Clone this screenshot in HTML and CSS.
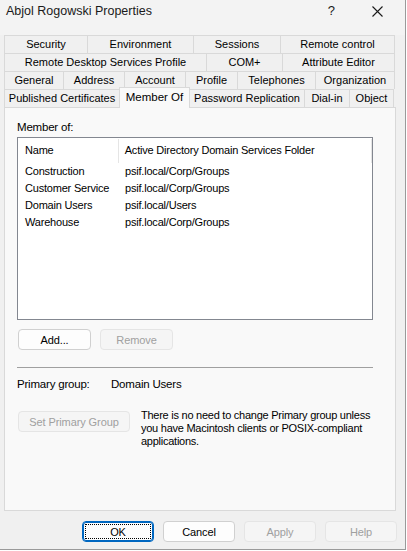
FILE: index.html
```html
<!DOCTYPE html>
<html>
<head>
<meta charset="utf-8">
<link rel="stylesheet" href="styles.css">
</head>
<body>
<div class="window">
  <div class="titlebar">
    <span class="title">Abjol Rogowski Properties</span>
    <span class="help-q">?</span>
    <span class="close-x"><svg width="11" height="11" viewBox="0 0 11 11"><path d="M0.5 0.5 L10.5 10.5 M10.5 0.5 L0.5 10.5" stroke="#1a1a1a" stroke-width="1.1" fill="none"/></svg></span>
  </div>
  <div class="tabs">
    <div class="tabrow">
      <div class="tab t-security">Security</div>
      <div class="tab t-env">Environment</div>
      <div class="tab t-sessions">Sessions</div>
      <div class="tab t-remote">Remote control</div>
    </div>
    <div class="tabrow">
      <div class="tab t-rds">Remote Desktop Services Profile</div>
      <div class="tab t-com">COM+</div>
      <div class="tab t-attr">Attribute Editor</div>
    </div>
    <div class="tabrow">
      <div class="tab t-general">General</div>
      <div class="tab t-address">Address</div>
      <div class="tab t-account">Account</div>
      <div class="tab t-profile">Profile</div>
      <div class="tab t-tel">Telephones</div>
      <div class="tab t-org">Organization</div>
    </div>
    <div class="tabrow">
      <div class="tab t-pub">Published Certificates</div>
      <div class="tab t-member selected">Member Of</div>
      <div class="tab t-pwd">Password Replication</div>
      <div class="tab t-dial">Dial-in</div>
      <div class="tab t-object">Object</div>
    </div>
  </div>
  <div class="panel">
    <div class="label">Member of:</div>
    <div class="listbox">
      <div class="lv-header">
        <div class="col col-name">Name</div>
        <div class="col col-folder">Active Directory Domain Services Folder</div>
        <div class="col col-rest"></div>
      </div>
      <div class="lv-row"><div class="cell c-name">Construction</div><div class="cell">psif.local/Corp/Groups</div></div>
      <div class="lv-row"><div class="cell c-name">Customer Service</div><div class="cell">psif.local/Corp/Groups</div></div>
      <div class="lv-row"><div class="cell c-name">Domain Users</div><div class="cell">psif.local/Users</div></div>
      <div class="lv-row"><div class="cell c-name">Warehouse</div><div class="cell">psif.local/Corp/Groups</div></div>
    </div>
    <div class="btnrow">
      <button class="btn">Add...</button>
      <button class="btn disabled">Remove</button>
    </div>
    <div class="separator"></div>
    <div class="primary">
      <span class="pg-label">Primary group:</span>
      <span class="pg-value">Domain Users</span>
    </div>
    <div class="setrow">
      <button class="btn disabled wide">Set Primary Group</button>
      <div class="note">There is no need to change Primary group unless<br>you have Macintosh clients or POSIX-compliant<br>applications.</div>
    </div>
  </div>
  <div class="footer">
    <button class="btn fbtn default"><span class="focus">OK</span></button>
    <button class="btn fbtn">Cancel</button>
    <button class="btn fbtn disabled">Apply</button>
    <button class="btn fbtn disabled">Help</button>
  </div>
</div>
</body>
</html>
```
FILE: styles.css
```css
* { box-sizing: border-box; }
html, body { margin: 0; padding: 0; background: #ffffff; }
body {
  font-family: "Liberation Sans", Arial, sans-serif;
  font-size: 12px;
  color: #000;
}
.window {
  width: 406px;
  height: 550px;
  background: #f0f0f0;
  border-right: 1px solid #9a9a9a;
  border-bottom: 1px solid #9a9a9a;
  display: flex;
  flex-direction: column;
}
.titlebar {
  height: 35px;
  display: flex;
  align-items: flex-start;
  padding-top: 3px;
  background: #f3f3f3;
}
.title {
  padding-left: 6px;
  font-size: 12.5px;
  line-height: 16px;
  color: #1a1a1a;
}
.help-q {
  margin-left: auto;
  font-size: 13px;
  line-height: 16px;
  margin-right: 37px;
  color: #1a1a1a;
}
.close-x {
  width: 11px;
  height: 11px;
  margin-top: 3px;
  margin-right: 22px;
  display: flex;
}
.tabs {
  margin-left: 4px;
  width: 391px;
  display: flex;
  flex-direction: column;
  font-size: 11px;
  position: relative;
  z-index: 1;
}
.tabrow {
  display: flex;
  height: 18px;
}
.tab {
  height: 18px;
  border: 1px solid #d9d9d9;
  border-right: none;
  border-bottom: none;
  background: #f0f0f0;
  text-align: center;
  line-height: 17px;
  white-space: nowrap;
}
.tab:last-child { border-right: 1px solid #d9d9d9; }
.t-security { width: 83px; }
.t-env { width: 106px; }
.t-sessions { width: 87px; }
.t-remote { width: 115px; }
.t-rds { width: 202px; }
.t-com { width: 76px; }
.t-attr { width: 113px; }
.t-general { width: 59px; }
.t-address { width: 61px; }
.t-account { width: 61px; }
.t-profile { width: 52px; }
.t-tel { width: 78px; }
.t-org { width: 80px; }
.t-pub { width: 115px; }
.t-member { width: 71px; }
.t-pwd { width: 115px; }
.t-dial { width: 45px; }
.t-object { width: 45px; }
.tab.selected {
  background: #f9f9f9;
  height: 21px;
  margin-top: -2px;
  border-right: 1px solid #d9d9d9;
  margin-right: -1px;
  line-height: 18px;
  font-size: 11.5px;
  position: relative;
  z-index: 2;
}
.panel {
  margin-left: 4px;
  width: 392px;
  height: 404px;
  background: #f9f9f9;
  border: 1px solid #d9d9d9;
  padding: 12px 22px 0 12px;
  display: flex;
  flex-direction: column;
  letter-spacing: -0.2px;
}
.label {
  line-height: 14px;
  font-size: 11.5px;
}
.listbox {
  margin-top: 3px;
  height: 183px;
  background: #fff;
  border: 1px solid #838790;
  font-size: 11px;
}
.lv-header {
  display: flex;
  height: 25px;
  padding-top: 1px;
}
.col {
  line-height: 23px;
  height: 24px;
  white-space: nowrap;
}
.col-name { width: 101px; padding-left: 7px; border-right: 1px solid #e5e5e5; }
.col-folder { width: 254px; padding-left: 6px; border-right: 1px solid #e5e5e5; }
.lv-row {
  display: flex;
  height: 17px;
  line-height: 17px;
}
.cell { white-space: nowrap; }
.c-name { width: 107px; padding-left: 7px; }
.btnrow {
  margin-top: 9px;
  display: flex;
  gap: 9px;
  padding-left: 1px;
}
.btn {
  width: 73px;
  height: 21px;
  font-family: "Liberation Sans", Arial, sans-serif;
  font-size: 11px;
  letter-spacing: -0.1px;
  background: #fdfdfd;
  border: 1px solid #d0d0d0;
  border-radius: 4px;
  color: #000;
  padding: 0;
  display: flex;
  align-items: center;
  justify-content: center;
}
.btn.disabled {
  background: #f5f5f5;
  border-color: #e5e5e5;
  color: #a0a0a0;
}
.btn.wide { width: 112px; }
.separator {
  margin-top: 17px;
  height: 1px;
  background: #a0a0a0;
}
.primary {
  margin-top: 9px;
  line-height: 14px;
  display: flex;
  font-size: 11.5px;
}
.pg-label { width: 94px; }
.setrow {
  margin-top: 18px;
  display: flex;
  gap: 11px;
  padding-left: 1px;
}
.setrow .btn { margin-top: 2px; }
.note {
  line-height: 13px;
  font-size: 11px;
  white-space: nowrap;
  letter-spacing: -0.25px;
}
.footer {
  display: flex;
  justify-content: flex-end;
  gap: 9px;
  padding-right: 8px;
  margin-top: 10px;
}
.btn.fbtn { width: 72px; }
.btn.default {
  border: 1px solid #0067c0;
  box-shadow: inset 0 0 0 1px #0067c0;
  padding: 2px;
}
.focus {
  width: 100%;
  height: 100%;
  border: 1px dotted #000;
  display: flex;
  align-items: center;
  justify-content: center;
}
```
